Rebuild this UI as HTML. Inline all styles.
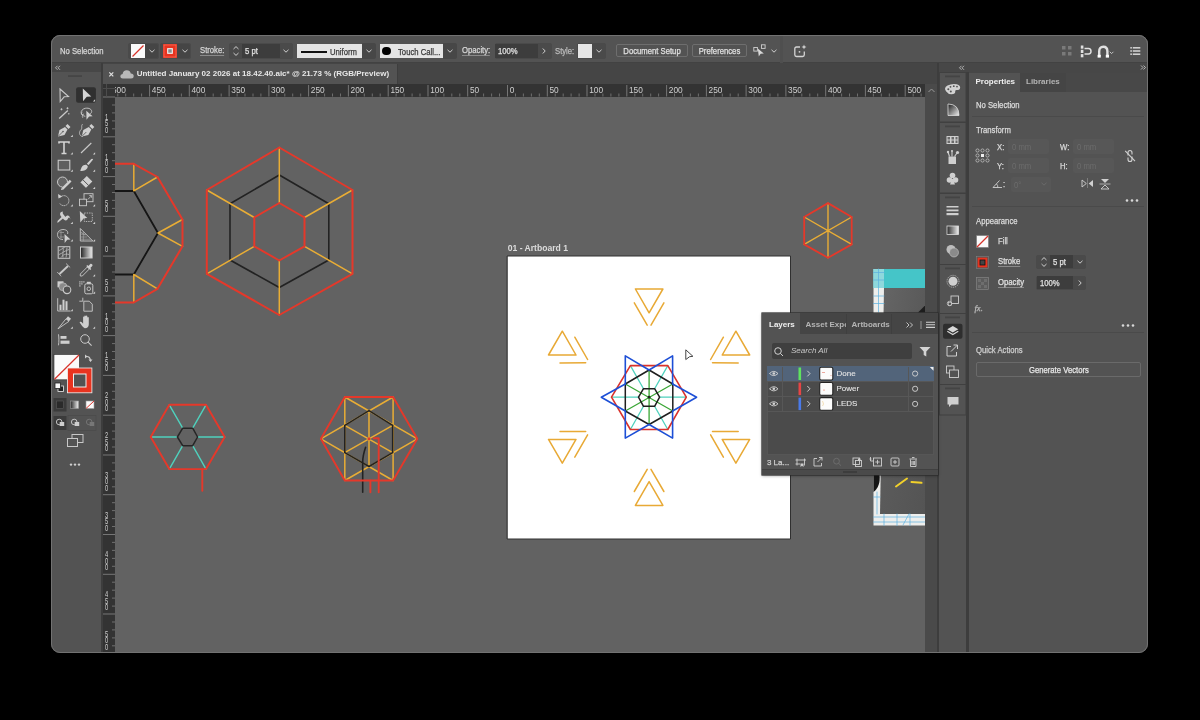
<!DOCTYPE html>
<html><head><meta charset="utf-8">
<style>
*{box-sizing:border-box;margin:0;padding:0}
html,body{width:1200px;height:720px;overflow:hidden;background:#000;font-family:"Liberation Sans",sans-serif;color:#e4e4e4}
.a{position:absolute}
#win{position:absolute;left:0;top:0;width:1200px;height:720px;clip-path:inset(35px 52px 67px 51px round 9px);background:#535353}
#frame{position:absolute;left:51px;top:35px;width:1097px;height:618px;border:1px solid #727272;border-radius:9px;pointer-events:none}
.t{filter:grayscale(1);position:absolute;white-space:nowrap;font-size:8.5px;line-height:10px;-webkit-text-stroke:0.25px currentColor}
</style></head><body>
<div id="win">
  <!-- control bar -->
  <div class="a" style="left:51px;top:35px;width:1097px;height:28px;background:#535353"></div>
  <!-- tools panel strip -->
  <div class="a" style="left:51px;top:63px;width:50px;height:9px;background:#474747"></div>
  <div class="a" style="left:101px;top:63px;width:2px;height:590px;background:#3d3d3d"></div>
  <!-- tab bar -->
  <div class="a" style="left:103px;top:63px;width:834px;height:21px;background:#454545"></div>
  <div class="a" style="left:103px;top:63.6px;width:294px;height:20px;background:#535353"></div><div class="a" style="left:397px;top:63.6px;width:1px;height:20px;background:#3e3e3e"></div><div class="a" style="left:51px;top:62.3px;width:1097px;height:1.2px;background:#424242"></div>
  <!-- rulers -->
  <div class="a" style="left:103px;top:84px;width:822px;height:12.5px;background:#333"></div>
  <div class="a" style="left:103px;top:84px;width:12px;height:568px;background:#333"></div>
  <!-- canvas -->
  <div class="a" style="left:115px;top:96.5px;width:810px;height:556px;background:#626262"></div>
  <!-- scroll col -->
  <div class="a" style="left:925px;top:84px;width:12.5px;height:568px;background:#4a4a4a"></div>
  <div class="a" style="left:937px;top:63px;width:2px;height:590px;background:#3d3d3d"></div>
  <!-- dock column -->
  <div class="a" style="left:939px;top:63px;width:209px;height:9.5px;background:#474747"></div>
  <div class="a" style="left:966px;top:72px;width:3px;height:581px;background:#3d3d3d"></div>
  <!-- CONTROL BAR -->
<div class="t" style="left:60px;top:46px;font-size:8.3px;color:#d6d6d6;transform:scaleX(0.928);transform-origin:left center">No Selection</div>
<div class="a" style="left:127.5px;top:43px;width:31px;height:15.5px;background:#4a4a4a;border-radius:2px"></div>
<div class="a" style="left:145px;top:43.5px;width:13px;height:14.5px;background:#454545;border-radius:0 2px 2px 0"></div>
<svg class="a" style="left:131px;top:44px" width="14" height="14" viewBox="0 0 14 14"><rect x="0" y="0" width="14" height="14" fill="#fafafa"/><path d="M1.5 12.5L12.5 1.5" stroke="#d8322a" stroke-width="1.3"/></svg>
<svg class="a" style="left:148px;top:48px" width="8" height="6" viewBox="0 0 8 6"><path d="M1.5 1.8L4 4.2L6.5 1.8" fill="none" stroke="#d0d0d0" stroke-width="1"/></svg>
<div class="a" style="left:160px;top:43px;width:31px;height:15.5px;background:#4a4a4a;border-radius:2px"></div>
<div class="a" style="left:177.3px;top:43.5px;width:13px;height:14.5px;background:#454545;border-radius:0 2px 2px 0"></div>
<svg class="a" style="left:163.3px;top:44px" width="14" height="14" viewBox="0 0 14 14"><rect x="0" y="0" width="14" height="14" fill="#e8331f"/><rect x="1" y="1" width="12" height="12" fill="none" stroke="#f08070" stroke-width="0.6"/><rect x="4.7" y="4.7" width="4.6" height="4.6" fill="#8a8a8a" stroke="#f4f4f4" stroke-width="1.1"/></svg>
<svg class="a" style="left:180.5px;top:48px" width="8" height="6" viewBox="0 0 8 6"><path d="M1.5 1.8L4 4.2L6.5 1.8" fill="none" stroke="#d0d0d0" stroke-width="1"/></svg>

<div class="t" style="left:200px;top:46px;font-size:8.3px;color:#d6d6d6;border-bottom:1px solid #8a8a8a;line-height:9px;transform:scaleX(0.928);transform-origin:left center">Stroke:</div>
<div class="a" style="left:228.5px;top:43px;width:64px;height:15.5px;background:#4a4a4a;border-radius:2px"></div>
<div class="a" style="left:242px;top:44px;width:38px;height:13.7px;background:#3d3d3d"></div>
<svg class="a" style="left:230px;top:44px" width="12" height="14" viewBox="0 0 12 14"><path d="M3.5 5L6 2.6L8.5 5M3.5 9L6 11.4L8.5 9" fill="none" stroke="#cfcfcf" stroke-width="1"/></svg>
<div class="t" style="left:245px;top:46px;font-size:8.3px;color:#e0e0e0;transform:scaleX(0.928);transform-origin:left center">5 pt</div>
<svg class="a" style="left:282px;top:48px" width="8" height="6" viewBox="0 0 8 6"><path d="M1.5 1.8L4 4.2L6.5 1.8" fill="none" stroke="#d0d0d0" stroke-width="1"/></svg>

<div class="a" style="left:296.7px;top:44px;width:65.3px;height:13.8px;background:#e4e4e4"></div>
<div class="a" style="left:301px;top:51px;width:26px;height:1.6px;background:#111"></div>
<div class="t" style="left:330px;top:46.5px;font-size:8.3px;color:#3a3a3a;transform:scaleX(0.928);transform-origin:left center">Uniform</div>
<div class="a" style="left:362px;top:43px;width:14px;height:15.5px;background:#474747;border-radius:0 2px 2px 0"></div>
<svg class="a" style="left:365px;top:48px" width="8" height="6" viewBox="0 0 8 6"><path d="M1.5 1.8L4 4.2L6.5 1.8" fill="none" stroke="#d0d0d0" stroke-width="1"/></svg>

<div class="a" style="left:380px;top:44px;width:63px;height:13.8px;background:#e4e4e4"></div>
<div class="a" style="left:382.3px;top:46.7px;width:8.6px;height:8.6px;background:#000;border-radius:50%"></div>
<div class="t" style="left:398px;top:46.5px;font-size:8.3px;color:#3a3a3a;transform:scaleX(0.928);transform-origin:left center">Touch Call...</div>
<div class="a" style="left:443px;top:43px;width:14px;height:15.5px;background:#474747;border-radius:0 2px 2px 0"></div>
<svg class="a" style="left:446px;top:48px" width="8" height="6" viewBox="0 0 8 6"><path d="M1.5 1.8L4 4.2L6.5 1.8" fill="none" stroke="#d0d0d0" stroke-width="1"/></svg>

<div class="t" style="left:461.7px;top:46px;font-size:8.3px;color:#d6d6d6;border-bottom:1px solid #8a8a8a;line-height:9px;transform:scaleX(0.928);transform-origin:left center">Opacity:</div>
<div class="a" style="left:494.5px;top:43px;width:57px;height:15.5px;background:#4a4a4a;border-radius:2px"></div>
<div class="a" style="left:495.3px;top:44px;width:42.7px;height:13.7px;background:#3d3d3d"></div>
<div class="t" style="left:497.5px;top:46px;font-size:8.3px;color:#e0e0e0;transform:scaleX(0.928);transform-origin:left center">100%</div>
<svg class="a" style="left:540px;top:47px" width="8" height="8" viewBox="0 0 8 8"><path d="M2.8 1.5L5.2 4L2.8 6.5" fill="none" stroke="#d0d0d0" stroke-width="1"/></svg>
<div class="t" style="left:554.7px;top:46px;font-size:8.3px;color:#bcbcbc;transform:scaleX(0.928);transform-origin:left center">Style:</div>
<div class="a" style="left:577px;top:43px;width:29px;height:15.5px;background:#4a4a4a;border-radius:2px"></div>
<div class="a" style="left:578px;top:44px;width:14.3px;height:13.7px;background:#e6e6e6"></div>
<svg class="a" style="left:595px;top:48px" width="8" height="6" viewBox="0 0 8 6"><path d="M1.5 1.8L4 4.2L6.5 1.8" fill="none" stroke="#d0d0d0" stroke-width="1"/></svg>

<div class="a" style="left:615.6px;top:44.4px;width:72px;height:13px;border:1px solid #6e6e6e;border-radius:2px"></div>
<div class="t" style="left:615.6px;top:46px;width:72px;text-align:center;font-size:8.3px;color:#e0e0e0;transform:scaleX(0.928);transform-origin:center">Document Setup</div>
<div class="a" style="left:691.7px;top:44.4px;width:55px;height:13px;border:1px solid #6e6e6e;border-radius:2px"></div>
<div class="t" style="left:691.7px;top:46px;width:55px;text-align:center;font-size:8.3px;color:#e0e0e0;transform:scaleX(0.928);transform-origin:center">Preferences</div>
<svg class="a" style="left:753px;top:44px" width="14" height="14" viewBox="0 0 14 14" fill="none" stroke="#cfcfcf" stroke-width="0.9"><rect x="0.8" y="3.5" width="3.6" height="3.6"/><rect x="8.5" y="0.8" width="3.6" height="3.6"/><path d="M4.8 4.5L5.8 12.5L7.6 9.8L10.8 9.6Z" fill="#d8d8d8" stroke="none"/></svg>
<svg class="a" style="left:769.5px;top:48px" width="8" height="6" viewBox="0 0 8 6"><path d="M1.5 1.8L4 4.2L6.5 1.8" fill="none" stroke="#d0d0d0" stroke-width="1"/></svg>
<div class="a" style="left:779.5px;top:36px;width:3.5px;height:26.5px;background:#4f4f4f"></div>
<svg class="a" style="left:793px;top:43.5px" width="14" height="14" viewBox="0 0 14 14" fill="none" stroke="#d4d4d4" stroke-width="1.3"><path d="M7 3H3.5Q1.8 3 1.8 4.7V10.8Q1.8 12.5 3.5 12.5H9.6Q11.3 12.5 11.3 10.8V7.5"/><circle cx="6.5" cy="7.8" r="0.9" fill="#d4d4d4" stroke="none"/><path d="M11 0.5L11.7 2.3L13.5 3L11.7 3.7L11 5.5L10.3 3.7L8.5 3L10.3 2.3Z" fill="#d4d4d4" stroke="none"/></svg>

<svg class="a" style="left:1061px;top:45px" width="12" height="12" viewBox="0 0 12 12" fill="#7a7a7a"><rect x="1" y="1" width="3.5" height="3.5"/><rect x="7" y="1" width="3.5" height="3.5"/><rect x="1" y="7" width="3.5" height="3.5"/><rect x="7" y="7" width="3.5" height="3.5"/></svg>
<svg class="a" style="left:1080px;top:44.5px" width="13" height="13" viewBox="0 0 13 13"><g fill="#e0e0e0"><rect x="0.8" y="0.5" width="2.6" height="3.2"/><rect x="0.8" y="4.8" width="2.6" height="3.2"/><rect x="0.8" y="9.1" width="2.6" height="3.2"/></g><path d="M4.5 3.5H8.5Q11 3.5 11 6.3Q11 9 8.5 9H4.5" fill="none" stroke="#e0e0e0" stroke-width="1.5"/></svg>
<svg class="a" style="left:1097px;top:44.5px" width="20" height="13" viewBox="0 0 20 13"><path d="M2.2 11V6.5Q2.2 1.8 6.3 1.8Q10.4 1.8 10.4 6.5V11" fill="none" stroke="#e0e0e0" stroke-width="2.4"/><rect x="0.6" y="9.8" width="3.2" height="2.8" fill="#fff"/><rect x="8.8" y="9.8" width="3.2" height="2.8" fill="#fff"/><path d="M12.8 6.8L14.6 8.6L16.4 6.8" fill="none" stroke="#d0d0d0" stroke-width="0.9"/></svg>
<svg class="a" style="left:1129.5px;top:46px" width="11" height="10" viewBox="0 0 11 10" fill="#cfcfcf"><rect x="0.3" y="1" width="1.6" height="1.6"/><rect x="0.3" y="4.2" width="1.6" height="1.6"/><rect x="0.3" y="7.4" width="1.6" height="1.6"/><rect x="2.8" y="1" width="7.5" height="1.6"/><rect x="2.8" y="4.2" width="7.5" height="1.6"/><rect x="2.8" y="7.4" width="7.5" height="1.6"/></svg>

  <svg class="a" style="left:0;top:0" width="1200" height="720" viewBox="0 0 1200 720" stroke-linecap="butt">
<rect x="76.1" y="87.2" width="19.8" height="15.6" rx="2" fill="#303030"/>
<g transform="translate(64.0 95.0)"><path d="M-4 -6L4.5 1.5L0.2 1.8L-3.8 6.5Z" fill="none" stroke="#c9c9c9" stroke-width="1.1"/></g>
<g transform="translate(86.3 95.0)"><path d="M-3.5 -6.5L5 1.5L0.5 1.8L-3.3 6.3Z" fill="#d4d4d4"/></g>
<path d="M95.1 99.3L95.1 101.5L92.9 101.5Z" fill="#d0d0d0"/>
<g transform="translate(64.0 112.8)"><path d="M-4.8 5.6L3.8 -2.3" stroke="#c9c9c9" stroke-width="1.3"/><path d="M-2.5 -4.5L-2.5 -2.5M-3.5 -3.5H-1.5M3.5 -5.5V-3.5M2.5 -4.5H4.5M4.8 0.5V1.5M4.3 1H5.3" stroke="#c9c9c9" stroke-width="0.9"/></g>
<g transform="translate(86.3 112.8)"><path d="M-1 3.5C-6 3 -7 -3 -1 -4.5C5 -5.5 7 -1 4 1" fill="none" stroke="#c9c9c9" stroke-width="0.9"/><path d="M-4 -1C-6 1 -4 3 -3 1.5C-2 0 -5 3 -3.5 5" fill="none" stroke="#c9c9c9" stroke-width="0.8"/><path d="M0 -2L6.3 3.5L2.8 3.8L0.2 7Z" fill="#cfcfcf"/></g>
<g transform="translate(64.0 130.5)"><path d="M-6 6L-4.5 -0.5L1 -3.5L3.5 -1L0.5 4.5Z" fill="#cfcfcf"/><path d="M1.5 -4.5L3.5 -6.5L6.5 -3.5L4.5 -1.5Z" fill="#cfcfcf"/><path d="M-5.5 5.5L-1.5 1.5" stroke="#535353" stroke-width="0.8"/><circle cx="-1" cy="1" r="0.8" fill="#535353"/></g>
<path d="M72.8 134.8L72.8 137.0L70.6 137.0Z" fill="#d0d0d0"/>
<g transform="translate(86.3 130.5)"><path d="M-4.5 6L-3 -0.5L2.5 -3.5L5 -1L2 4.5Z" fill="#cfcfcf"/><path d="M3 -4.5L5 -6.5L8 -3.5L6 -1.5Z" fill="#cfcfcf"/><path d="M-4 5.5L0 1.5" stroke="#535353" stroke-width="0.8"/><path d="M-3.5 -6.5C-6 -4.5 -3 -2.5 -6 0C-8 3 -6 6 -3.5 6" fill="none" stroke="#c9c9c9" stroke-width="0.8"/></g>
<g transform="translate(64.0 148.0)"><path d="M-5 -4.5V-6H5V-4.5M0 -6V5.5M-2.5 5.5H2.5" fill="none" stroke="#d4d4d4" stroke-width="1.6"/></g>
<path d="M72.8 152.3L72.8 154.5L70.6 154.5Z" fill="#d0d0d0"/>
<g transform="translate(86.3 148.0)"><path d="M-5.3 5L5 -5" stroke="#c9c9c9" stroke-width="1.1"/></g>
<path d="M95.1 152.3L95.1 154.5L92.9 154.5Z" fill="#d0d0d0"/>
<g transform="translate(64.0 165.3)"><rect x="-5.8" y="-5" width="11.6" height="9.7" fill="#5e5e5e" stroke="#c9c9c9" stroke-width="1.1"/></g>
<path d="M72.8 169.6L72.8 171.8L70.6 171.8Z" fill="#d0d0d0"/>
<g transform="translate(86.3 165.3)"><path d="M0.5 -1.5L5 -6.3Q6.3 -7 6.8 -5.8L2.3 -0.2Z" fill="#cfcfcf"/><path d="M-6 5.8C-5.2 2 -3.5 -1 0 -0.5L1.5 1C1.2 4.5 -2 5.8 -6 5.8Z" fill="#cfcfcf"/></g>
<path d="M95.1 169.6L95.1 171.8L92.9 171.8Z" fill="#d0d0d0"/>
<g transform="translate(64.0 182.5)"><path d="M-1.5 4.5A5 5 0 1 1 3.5 -0.5" fill="#666" stroke="#c9c9c9" stroke-width="1"/><path d="M-2.5 5.5L5.8 -2.8L7.5 -1.1L-0.8 7.2Z" fill="#cfcfcf"/><path d="M-2.5 5.5L-3 7.5L-0.8 7.2Z" fill="#cfcfcf"/></g>
<path d="M72.8 186.8L72.8 189.0L70.6 189.0Z" fill="#d0d0d0"/>
<g transform="translate(86.3 182.5)"><path d="M0.5 -6.5L6 -1L-0.5 5.5L-6 0Z" fill="#cfcfcf"/><path d="M-6 0L-0.5 5.5" stroke="#535353" stroke-width="0.5"/><path d="M-3.5 -2.8L2.5 3.2" stroke="#535353" stroke-width="1"/></g>
<path d="M95.1 186.8L95.1 189.0L92.9 189.0Z" fill="#d0d0d0"/>
<g transform="translate(64.0 200.0)"><path d="M-3.5 -3A5 5 0 1 1 -4.5 3" fill="none" stroke="#c9c9c9" stroke-width="1" stroke-dasharray="1.3 0.7"/><path d="M-6 -6L-5.5 -1.5L-1.8 -3.5Z" fill="#cfcfcf"/></g>
<path d="M72.8 204.3L72.8 206.5L70.6 206.5Z" fill="#d0d0d0"/>
<g transform="translate(86.3 200.0)"><rect x="-2.3" y="-6.3" width="9" height="8" fill="none" stroke="#c9c9c9" stroke-width="0.9"/><rect x="-6.8" y="-0.8" width="7" height="6.5" fill="#535353" stroke="#c9c9c9" stroke-width="0.9"/><path d="M1.5 -0.5L5 -4M3 -4.5H5.3V-2.2" fill="none" stroke="#c9c9c9" stroke-width="0.8"/></g>
<path d="M95.1 204.3L95.1 206.5L92.9 206.5Z" fill="#d0d0d0"/>
<g transform="translate(64.0 217.5)"><path d="M-6.5 5.5L-1 1C0 3 3 4 4 1C5 -1 6 0 6.5 2.5C6 -2.5 3 -3 1.5 -0.5C0 -3 -2 -3.5 -1 -6C-4 -6 -5 -3 -2.5 -0.5L-6.5 3.5Z" fill="#cfcfcf"/></g>
<path d="M72.8 221.8L72.8 224.0L70.6 224.0Z" fill="#d0d0d0"/>
<g transform="translate(86.3 217.5)"><path d="M-6.5 -6.5L1 0.5L-2.5 0.8L-6 5Z" fill="#cfcfcf"/><rect x="-2" y="-4.5" width="8" height="8.5" fill="none" stroke="#c9c9c9" stroke-width="0.8" stroke-dasharray="1.4 1"/></g>
<path d="M95.1 221.8L95.1 224.0L92.9 224.0Z" fill="#d0d0d0"/>
<g transform="translate(64.0 235.0)"><path d="M-1 4.5C-5 4.5 -6.5 2 -6.5 -0.5C-6.5 -3.5 -4 -5.5 -1 -5.5C2.5 -5.5 4.5 -3.5 3.5 -1" fill="none" stroke="#c9c9c9" stroke-width="0.9"/><path d="M-4.5 -2.5H0M-4.5 2H0M-3 -4V3.5" stroke="#9a9a9a" stroke-width="0.8"/><path d="M0.5 -1L6.5 4.5L3.2 4.8L0.7 8Z" fill="#cfcfcf"/></g>
<path d="M72.8 239.3L72.8 241.5L70.6 241.5Z" fill="#d0d0d0"/>
<g transform="translate(86.3 235.0)"><path d="M-6 -6.5V6H6.5L-6 -6.5" fill="none" stroke="#c9c9c9" stroke-width="0.9"/><path d="M-6 -3.5L-1 0.5M-6 2L1 2M-6 4.2H4.5M-3 -3.5V6M-6 -1L0 -0.5" stroke="#a8a8a8" stroke-width="0.7"/></g>
<path d="M95.1 239.3L95.1 241.5L92.9 241.5Z" fill="#d0d0d0"/>
<g transform="translate(64.0 252.5)"><rect x="-5.8" y="-5.8" width="11.6" height="11.6" fill="none" stroke="#c9c9c9" stroke-width="1"/><path d="M-5 -2C-2 -3 0 -6 1 -5M-5 2C-2 1 1 -2 5 -3M-3 5C-1 2 2 1 5 2M-1 -5C0 -1 -2 2 -1 5M3 -5C2 -1 3 2 2 5" fill="none" stroke="#bdbdbd" stroke-width="0.8"/></g>
<g transform="translate(86.3 252.5)"><defs><linearGradient id="tg" x1="0" x2="1"><stop offset="0" stop-color="#222"/><stop offset="1" stop-color="#eee"/></linearGradient></defs><rect x="-5.8" y="-5.5" width="11.6" height="11" fill="url(#tg)" stroke="#c9c9c9" stroke-width="1"/></g>
<g transform="translate(64.0 270.0)"><path d="M-4.5 4L4 -4" stroke="#c9c9c9" stroke-width="1.8"/><path d="M-6.8 2L-2.8 6.3M2 -6.5L6.2 -2.5" stroke="#c9c9c9" stroke-width="0.8"/></g>
<g transform="translate(86.3 270.0)"><path d="M-6 6L-6 4L1 -3L3 -1L-4 6Z" fill="none" stroke="#c9c9c9" stroke-width="0.9"/><path d="M0 -4L4 0L5 -1L4 -2L6 -4C7 -5 5 -7 4 -6L2 -4L1 -5Z" fill="#cfcfcf"/></g>
<path d="M95.1 274.3L95.1 276.5L92.9 276.5Z" fill="#d0d0d0"/>
<g transform="translate(64.0 287.3)"><rect x="-6.5" y="-6" width="6" height="6" fill="#cfcfcf"/><circle cx="-1" cy="-0.5" r="4" fill="#8a8a8a" stroke="#bdbdbd" stroke-width="0.7"/><circle cx="3" cy="2.5" r="3.8" fill="#535353" stroke="#c9c9c9" stroke-width="1.1"/></g>
<g transform="translate(86.3 287.3)"><rect x="-1.5" y="-3.5" width="8" height="10" rx="1.5" fill="none" stroke="#c9c9c9" stroke-width="1"/><rect x="0.5" y="-5.5" width="4" height="2" fill="#cfcfcf"/><circle cx="2.5" cy="1.5" r="1.8" fill="none" stroke="#c9c9c9" stroke-width="0.9"/><g fill="#cfcfcf"><rect x="-7" y="-6" width="1.2" height="1.2"/><rect x="-5" y="-6" width="1.2" height="1.2"/><rect x="-3" y="-6" width="1.2" height="1.2"/><rect x="-7" y="-4" width="1.2" height="1.2"/><rect x="-5" y="-4" width="1.2" height="1.2"/><rect x="-7" y="-2" width="1.2" height="1.2"/></g></g>
<path d="M95.1 291.6L95.1 293.8L92.9 293.8Z" fill="#d0d0d0"/>
<g transform="translate(64.0 304.7)"><path d="M-6.3 -6.5V6.3H6.5" fill="none" stroke="#c9c9c9" stroke-width="0.9"/><rect x="-4.5" y="0" width="2" height="5.5" fill="#cfcfcf"/><rect x="-1.5" y="-5" width="2" height="10.5" fill="#cfcfcf"/><rect x="1.5" y="-3.5" width="2" height="9" fill="#cfcfcf"/></g>
<path d="M72.8 309.0L72.8 311.2L70.6 311.2Z" fill="#d0d0d0"/>
<g transform="translate(86.3 304.7)"><path d="M-2.5 -3.5H3L6 -0.5V6.5H-2.5Z" fill="#5e5e5e" stroke="#c9c9c9" stroke-width="0.9"/><path d="M-7 -3.5H-3.5M-3.5 -7V-3.5" stroke="#c9c9c9" stroke-width="0.9"/></g>
<g transform="translate(64.0 322.3)"><path d="M-6 6.5L2 -3.5L5 -1Z" fill="none" stroke="#c9c9c9" stroke-width="0.9"/><path d="M2 -3.5L4 -6L7 -3.5L5 -1Z" fill="#cfcfcf"/></g>
<path d="M72.8 326.6L72.8 328.8L70.6 328.8Z" fill="#d0d0d0"/>
<g transform="translate(86.3 322.3)"><path d="M-1.5 6C-3.5 5 -5 2.5 -6.5 0.5C-7 -0.5 -5.5 -1 -4.5 0L-3.2 1.5V-5C-3.2 -6 -2 -6 -2 -5V-1V-6C-2 -7 -0.5 -7 -0.5 -6V-1V-6C-0.5 -7 1 -7 1 -6V-0.5V-4.5C1 -5.5 2.5 -5.5 2.5 -4.5V2C2.5 4.5 1 6 -1.5 6Z" fill="#cfcfcf"/></g>
<path d="M95.1 326.6L95.1 328.8L92.9 328.8Z" fill="#d0d0d0"/>
<g transform="translate(64.0 339.8)"><path d="M-5.5 -5.5C-5 -2 -5 2 -5.5 5.5" fill="none" stroke="#c9c9c9" stroke-width="0.9"/><rect x="-3.5" y="-3.8" width="6" height="2.8" fill="#cfcfcf"/><rect x="-3.5" y="0.8" width="9" height="3.2" fill="#cfcfcf"/></g>
<g transform="translate(86.3 339.8)"><circle cx="-1.3" cy="-0.8" r="4.3" fill="none" stroke="#c9c9c9" stroke-width="1"/><path d="M1.8 2.3L5.3 5.8" stroke="#c9c9c9" stroke-width="1.2"/></g>
<rect x="68" y="75.3" width="14" height="1.6" fill="#444"/>
<path d="M57.5 65.8L55.5 67.8L57.5 69.8M60 65.8L58 67.8L60 69.8" fill="none" stroke="#cfcfcf" stroke-width="0.8"/>
<rect x="54" y="354.5" width="25.4" height="25.3" fill="#fafafa" stroke="#2a2a2a" stroke-width="0.6"/>
<path d="M54.5 379.3L79 355" stroke="#d8322a" stroke-width="1.2"/>
<rect x="67.5" y="368" width="24.4" height="24.8" fill="#e8331f" stroke="#f0f0f0" stroke-width="0.8"/>
<rect x="73.5" y="374" width="12.5" height="13" fill="#535353" stroke="#f0f0f0" stroke-width="1"/>
<path d="M86 356.5Q90 356 90.5 360.5" fill="none" stroke="#cfcfcf" stroke-width="1.1"/><path d="M85 354.5L87.5 356.5L85 358.5ZM88.5 359.5L90.5 362L92.5 359.5Z" fill="#cfcfcf"/>
<rect x="58" y="386" width="5.5" height="5.5" fill="#222" stroke="#eee" stroke-width="0.8"/><rect x="55" y="383" width="5.5" height="5.5" fill="#fafafa" stroke="#222" stroke-width="0.8"/>
<rect x="53.5" y="398" width="13" height="13.5" fill="#3b3b3b"/><rect x="56.5" y="401" width="7" height="7.5" fill="#2a2a2a" stroke="#5a5a5a" stroke-width="0.6"/>
<defs><linearGradient id="g2" x1="0" x2="1"><stop offset="0" stop-color="#2a2a2a"/><stop offset="1" stop-color="#f0f0f0"/></linearGradient></defs><rect x="70.5" y="401" width="8" height="7.5" fill="url(#g2)" stroke="#999" stroke-width="0.6"/>
<rect x="86" y="401" width="8" height="7.5" fill="#fafafa" stroke="#999" stroke-width="0.6"/><path d="M86 408.5L94 401" stroke="#d8322a" stroke-width="1"/>
<rect x="53.5" y="416" width="13" height="14" fill="#3b3b3b"/>
<circle cx="59.2" cy="422" r="2.8" fill="none" stroke="#cfcfcf" stroke-width="0.9"/><rect x="59.7" y="422" width="4.5" height="4" fill="#cfcfcf"/>
<circle cx="74.2" cy="422" r="2.8" fill="none" stroke="#cfcfcf" stroke-width="0.9"/><rect x="74.7" y="422" width="4.5" height="4" fill="#cfcfcf"/>
<circle cx="89.2" cy="422" r="2.8" fill="none" stroke="#777" stroke-width="0.9"/><rect x="89.7" y="422" width="4.5" height="4" fill="#777"/>
<rect x="68" y="415.5" width="28" height="15" fill="none" stroke="#4a4a4a" stroke-width="0.7"/>
<rect x="72" y="434.5" width="11" height="8" fill="none" stroke="#c8c8c8" stroke-width="1"/><rect x="67.5" y="438.5" width="10" height="8" fill="#535353" stroke="#c8c8c8" stroke-width="1"/>
<g fill="#cfcfcf"><circle cx="71" cy="464.6" r="1.2"/><circle cx="75" cy="464.6" r="1.2"/><circle cx="79" cy="464.6" r="1.2"/></g>
</svg>
  <!-- TAB -->
<svg class="a" style="left:107px;top:69.5px" width="9" height="9" viewBox="0 0 9 9"><path d="M2.3 2.3L6.3 6.3M6.3 2.3L2.3 6.3" stroke="#e0e0e0" stroke-width="1.2"/></svg>
<svg class="a" style="left:119.5px;top:67.5px" width="14" height="11" viewBox="0 0 14 11"><path d="M2.8 10.5Q0.3 10.5 0.3 8.3Q0.3 6.2 2.6 6Q3 2.2 6.8 2.2Q10 2.2 10.8 5.4Q13.7 5.6 13.7 8Q13.7 10.5 11 10.5Z" fill="#b8b8b8"/></svg>
<div class="t" style="left:136.7px;top:68.5px;font-size:8px;font-weight:bold;color:#e8e8e8;-webkit-text-stroke:0">Untitled January 02 2026 at 18.42.40.aic* @ 21.73 % (RGB/Preview)</div>
<!-- scroll up arrow -->
<svg class="a" style="left:926px;top:86px" width="11" height="9" viewBox="0 0 11 9"><path d="M2.5 6L5.5 3L8.5 6" fill="none" stroke="#9a9a9a" stroke-width="1"/></svg>

  <svg class="a" style="left:0;top:0" width="1200" height="720" viewBox="0 0 1200 720">
<path d="M961.5 65.8L959.5 67.8L961.5 69.8M964 65.8L962 67.8L964 69.8" fill="none" stroke="#cfcfcf" stroke-width="0.8"/>
<path d="M1141 65.5L1143 67.5L1141 69.5M1143.5 65.5L1145.5 67.5L1143.5 69.5" fill="none" stroke="#cfcfcf" stroke-width="0.8"/>
<g fill="none" stroke="#404040" stroke-width="1">
<rect x="939.5" y="72.5" width="26.5" height="49.5" fill="#535353"/>
<rect x="939.5" y="122.5" width="26.5" height="70.5" fill="#535353"/>
<rect x="939.5" y="193.5" width="26.5" height="71" fill="#535353"/>
<rect x="939.5" y="264.5" width="26.5" height="49" fill="#535353"/>
<rect x="939.5" y="313.5" width="26.5" height="71" fill="#535353"/>
<rect x="939.5" y="384.5" width="26.5" height="30.5" fill="#535353"/>
</g>
<g fill="#444">
<rect x="945" y="75.5" width="15" height="1.8"/><rect x="945" y="125.5" width="15" height="1.8"/><rect x="945" y="196.5" width="15" height="1.8"/><rect x="945" y="267.5" width="15" height="1.8"/><rect x="945" y="316.5" width="15" height="1.8"/><rect x="945" y="387.5" width="15" height="1.8"/>
</g>
<!-- palette -->
<path d="M946.2 91.5Q943.3 88 947.5 85.5Q952 83.2 956.8 84.3Q961 85.5 960 88.5Q959.2 90.5 956.8 90Q954.8 89.8 955.2 91.8Q955.5 94.2 951.5 94.2Q948 94.2 946.2 91.5Z" fill="#d2d2d2"/>
<g fill="#535353"><circle cx="948.3" cy="89.3" r="1"/><circle cx="950.8" cy="91.6" r="1"/><circle cx="950.5" cy="86.8" r="0.9"/><circle cx="953.8" cy="86.2" r="0.9"/><circle cx="957" cy="86.6" r="0.9"/></g>
<!-- gradient quarter -->
<defs><linearGradient id="dg" x1="0" y1="0" x2="1" y2="1"><stop offset="0" stop-color="#1a1a1a"/><stop offset="1" stop-color="#f0f0f0"/></linearGradient>
<linearGradient id="dg2" x1="0" x2="1"><stop offset="0" stop-color="#2a2a2a"/><stop offset="1" stop-color="#eee"/></linearGradient></defs>
<path d="M948 104V115.5H959Q959 104 948 104Z" fill="url(#dg)" stroke="#dcdcdc" stroke-width="0.8"/>
<!-- swatches -->
<rect x="946.5" y="136" width="12" height="8" fill="#cfcfcf"/>
<g fill="#6a6a6a"><rect x="947.5" y="137" width="2.5" height="2.5"/><rect x="951.5" y="137" width="2.5" height="2.5"/><rect x="955.5" y="137" width="2" height="2.5"/><rect x="947.5" y="140.5" width="2.5" height="2.5"/><rect x="951.5" y="140.5" width="2.5" height="2.5"/><rect x="955.5" y="140.5" width="2" height="2.5"/></g>
<!-- brushes -->
<path d="M948.5 156.5H956V164H948.5Z" fill="#cfcfcf"/>
<path d="M949.5 156.5L948 152M952 156.5V151.5M954.5 156.5L957 153" stroke="#cfcfcf" stroke-width="1.1"/>
<circle cx="948" cy="152" r="1.2" fill="#cfcfcf"/><circle cx="957.5" cy="152.5" r="1.6" fill="#cfcfcf"/><circle cx="952" cy="151" r="1.1" fill="#cfcfcf"/>
<!-- club -->
<g fill="#cfcfcf"><circle cx="952.5" cy="175.5" r="2.8"/><circle cx="949.5" cy="180" r="2.8"/><circle cx="955.5" cy="180" r="2.8"/><path d="M952 179L950 184.5H955L953 179Z"/></g>
<!-- stroke lines -->
<g fill="#cfcfcf"><rect x="946.5" y="206" width="12" height="1.5"/><rect x="946.5" y="209.5" width="12" height="1.8"/><rect x="946.5" y="213" width="12" height="2.2"/></g>
<!-- gradient rect -->
<rect x="947" y="226" width="11.5" height="8.5" fill="url(#dg2)" stroke="#dcdcdc" stroke-width="0.8"/>
<!-- transparency -->
<circle cx="951" cy="249.5" r="4.5" fill="#bdbdbd"/><circle cx="954" cy="252.5" r="4.5" fill="#8a8a8a" stroke="#c8c8c8" stroke-width="0.6"/>
<!-- appearance sun -->
<circle cx="953" cy="281.3" r="4.5" fill="#cfcfcf"/><circle cx="953" cy="281.3" r="6" fill="none" stroke="#cfcfcf" stroke-width="0.8" stroke-dasharray="1 1"/>
<!-- shape builder -->
<rect x="951" y="296" width="7.5" height="7.5" fill="none" stroke="#cfcfcf" stroke-width="0.9"/><circle cx="949.5" cy="303.5" r="2.2" fill="#535353" stroke="#cfcfcf" stroke-width="0.8"/><rect x="948.5" y="302.5" width="3" height="3" fill="none" stroke="#cfcfcf" stroke-width="0.6"/>
<!-- layers active -->
<rect x="943" y="323.8" width="19.5" height="15" rx="2" fill="#2e2e2e"/>
<path d="M952.8 326L958.3 329.2L952.8 332.4L947.3 329.2Z" fill="#d8d8d8"/>
<path d="M947.3 331.3L952.8 334.5L958.3 331.3" fill="none" stroke="#d8d8d8" stroke-width="1.1"/>
<!-- export -->
<path d="M951 346.5H947V356H956.5V352" fill="none" stroke="#cfcfcf" stroke-width="1"/><path d="M951 351.5L957.5 345M953.5 345H957.5V349" fill="none" stroke="#cfcfcf" stroke-width="1"/>
<!-- artboards -->
<rect x="946.5" y="366" width="7.5" height="7" fill="none" stroke="#cfcfcf" stroke-width="0.9"/><rect x="949.5" y="370" width="9" height="7.5" fill="#535353" stroke="#cfcfcf" stroke-width="0.9"/>
<!-- comment -->
<path d="M947.5 397H958.5V404.5H951.5L949 407V404.5H947.5Z" fill="#cfcfcf"/>
</svg>

  <svg class="a" style="left:0;top:0;filter:grayscale(1)" width="1200" height="720" viewBox="0 0 1200 720"><defs><clipPath id="rh"><rect x="115" y="84" width="810" height="13"/></clipPath><clipPath id="rv"><rect x="103" y="96.5" width="12" height="556"/></clipPath></defs><g stroke="#767676" stroke-width="1" fill="none"><path d="M149.6 85V96.5M189.3 85V96.5M229.1 85V96.5M268.9 85V96.5M308.6 85V96.5M348.4 85V96.5M388.2 85V96.5M428.0 85V96.5M467.7 85V96.5M507.5 85V96.5M547.3 85V96.5M587.0 85V96.5M626.8 85V96.5M666.6 85V96.5M706.4 85V96.5M746.1 85V96.5M785.9 85V96.5M825.7 85V96.5M865.4 85V96.5M905.2 85V96.5M103 97.0H115M103 136.8H115M103 176.6H115M103 216.3H115M103 256.1H115M103 295.9H115M103 335.6H115M103 375.4H115M103 415.2H115M103 455.0H115M103 494.7H115M103 534.5H115M103 574.3H115M103 614.0H115"/></g><g stroke="#6e6e6e" stroke-width="1" fill="none"><path d="M117.8 93.5V96.5M125.7 93.5V96.5M133.7 93.5V96.5M141.6 93.5V96.5M157.5 93.5V96.5M165.5 93.5V96.5M173.4 93.5V96.5M181.4 93.5V96.5M197.3 93.5V96.5M205.2 93.5V96.5M213.2 93.5V96.5M221.2 93.5V96.5M237.1 93.5V96.5M245.0 93.5V96.5M253.0 93.5V96.5M260.9 93.5V96.5M276.8 93.5V96.5M284.8 93.5V96.5M292.7 93.5V96.5M300.7 93.5V96.5M316.6 93.5V96.5M324.6 93.5V96.5M332.5 93.5V96.5M340.5 93.5V96.5M356.4 93.5V96.5M364.3 93.5V96.5M372.3 93.5V96.5M380.2 93.5V96.5M396.1 93.5V96.5M404.1 93.5V96.5M412.1 93.5V96.5M420.0 93.5V96.5M435.9 93.5V96.5M443.9 93.5V96.5M451.8 93.5V96.5M459.8 93.5V96.5M475.7 93.5V96.5M483.6 93.5V96.5M491.6 93.5V96.5M499.5 93.5V96.5M515.5 93.5V96.5M523.4 93.5V96.5M531.4 93.5V96.5M539.3 93.5V96.5M555.2 93.5V96.5M563.2 93.5V96.5M571.1 93.5V96.5M579.1 93.5V96.5M595.0 93.5V96.5M602.9 93.5V96.5M610.9 93.5V96.5M618.9 93.5V96.5M634.8 93.5V96.5M642.7 93.5V96.5M650.7 93.5V96.5M658.6 93.5V96.5M674.5 93.5V96.5M682.5 93.5V96.5M690.4 93.5V96.5M698.4 93.5V96.5M714.3 93.5V96.5M722.3 93.5V96.5M730.2 93.5V96.5M738.2 93.5V96.5M754.1 93.5V96.5M762.0 93.5V96.5M770.0 93.5V96.5M777.9 93.5V96.5M793.8 93.5V96.5M801.8 93.5V96.5M809.8 93.5V96.5M817.7 93.5V96.5M833.6 93.5V96.5M841.6 93.5V96.5M849.5 93.5V96.5M857.5 93.5V96.5M873.4 93.5V96.5M881.3 93.5V96.5M889.3 93.5V96.5M897.2 93.5V96.5M913.2 93.5V96.5M921.1 93.5V96.5M112 105.0H115M112 112.9H115M112 120.9H115M112 128.8H115M112 144.7H115M112 152.7H115M112 160.7H115M112 168.6H115M112 184.5H115M112 192.5H115M112 200.4H115M112 208.4H115M112 224.3H115M112 232.2H115M112 240.2H115M112 248.1H115M112 264.1H115M112 272.0H115M112 280.0H115M112 287.9H115M112 303.8H115M112 311.8H115M112 319.7H115M112 327.7H115M112 343.6H115M112 351.5H115M112 359.5H115M112 367.5H115M112 383.4H115M112 391.3H115M112 399.3H115M112 407.2H115M112 423.1H115M112 431.1H115M112 439.0H115M112 447.0H115M112 462.9H115M112 470.9H115M112 478.8H115M112 486.8H115M112 502.7H115M112 510.6H115M112 518.6H115M112 526.5H115M112 542.4H115M112 550.4H115M112 558.4H115M112 566.3H115M112 582.2H115M112 590.2H115M112 598.1H115M112 606.1H115M112 622.0H115M112 629.9H115M112 637.9H115M112 645.8H115"/></g><g clip-path="url(#rh)" fill="#d0d0d0" font-family="Liberation Sans" font-size="8.3"><text x="112.0" y="93" >500</text><text x="151.8" y="93" >450</text><text x="191.5" y="93" >400</text><text x="231.3" y="93" >350</text><text x="271.1" y="93" >300</text><text x="310.8" y="93" >250</text><text x="350.6" y="93" >200</text><text x="390.4" y="93" >150</text><text x="430.2" y="93" >100</text><text x="469.9" y="93" >50</text><text x="509.7" y="93" >0</text><text x="549.5" y="93" >50</text><text x="589.2" y="93" >100</text><text x="629.0" y="93" >150</text><text x="668.8" y="93" >200</text><text x="708.6" y="93" >250</text><text x="748.3" y="93" >300</text><text x="788.1" y="93" >350</text><text x="827.9" y="93" >400</text><text x="867.6" y="93" >450</text><text x="907.4" y="93" >500</text></g><g clip-path="url(#rv)" fill="#d0d0d0" font-family="Liberation Sans" font-size="8.4" text-anchor="middle"><text transform="translate(106.7 119.8) scale(0.68 1)">1</text><text transform="translate(106.7 126.3) scale(0.68 1)">5</text><text transform="translate(106.7 132.8) scale(0.68 1)">0</text><text transform="translate(106.7 159.6) scale(0.68 1)">1</text><text transform="translate(106.7 166.1) scale(0.68 1)">0</text><text transform="translate(106.7 172.6) scale(0.68 1)">0</text><text transform="translate(106.7 205.8) scale(0.68 1)">5</text><text transform="translate(106.7 212.3) scale(0.68 1)">0</text><text transform="translate(106.7 252.1) scale(0.68 1)">0</text><text transform="translate(106.7 285.4) scale(0.68 1)">5</text><text transform="translate(106.7 291.9) scale(0.68 1)">0</text><text transform="translate(106.7 318.6) scale(0.68 1)">1</text><text transform="translate(106.7 325.1) scale(0.68 1)">0</text><text transform="translate(106.7 331.6) scale(0.68 1)">0</text><text transform="translate(106.7 358.4) scale(0.68 1)">1</text><text transform="translate(106.7 364.9) scale(0.68 1)">5</text><text transform="translate(106.7 371.4) scale(0.68 1)">0</text><text transform="translate(106.7 398.2) scale(0.68 1)">2</text><text transform="translate(106.7 404.7) scale(0.68 1)">0</text><text transform="translate(106.7 411.2) scale(0.68 1)">0</text><text transform="translate(106.7 438.0) scale(0.68 1)">2</text><text transform="translate(106.7 444.5) scale(0.68 1)">5</text><text transform="translate(106.7 451.0) scale(0.68 1)">0</text><text transform="translate(106.7 477.7) scale(0.68 1)">3</text><text transform="translate(106.7 484.2) scale(0.68 1)">0</text><text transform="translate(106.7 490.7) scale(0.68 1)">0</text><text transform="translate(106.7 517.5) scale(0.68 1)">3</text><text transform="translate(106.7 524.0) scale(0.68 1)">5</text><text transform="translate(106.7 530.5) scale(0.68 1)">0</text><text transform="translate(106.7 557.3) scale(0.68 1)">4</text><text transform="translate(106.7 563.8) scale(0.68 1)">0</text><text transform="translate(106.7 570.3) scale(0.68 1)">0</text><text transform="translate(106.7 597.0) scale(0.68 1)">4</text><text transform="translate(106.7 603.5) scale(0.68 1)">5</text><text transform="translate(106.7 610.0) scale(0.68 1)">0</text><text transform="translate(106.7 636.8) scale(0.68 1)">5</text><text transform="translate(106.7 643.3) scale(0.68 1)">0</text><text transform="translate(106.7 649.8) scale(0.68 1)">0</text></g><g stroke="#4c4c4c" stroke-width="1"><path d="M103 88.5H115M106.5 84V96.5"/></g></svg>
  <svg class="a" style="left:0;top:0" width="1200" height="720" viewBox="0 0 1200 720">
<defs><clipPath id="cv"><rect x="115" y="96.5" width="810" height="556"/></clipPath></defs>
<g clip-path="url(#cv)" fill="none" stroke-linecap="round" stroke-linejoin="round">
<!-- left partial shape -->
<g stroke="#151515" stroke-width="1.8"><path d="M110 191H133.8L158 233L133.8 274.5H110"/></g>
<g stroke="#e9ad35" stroke-width="1.5"><path d="M133.8 163.8V190.8L157.5 177M158 233L182.5 219.5M158 233L182.5 246.3M133.8 274.5V302.5M133.8 274.5L157.5 288.8"/></g>
<g stroke="#e5382a" stroke-width="2"><path d="M110 163.8H133.8L157.5 177L182.5 219.5V246.3L157.5 288.8L133.8 302.5H110"/></g>
<!-- big hexagon -->
<g stroke="#222" stroke-width="1.6"><path d="M279.3 175L328.8 203.8V260L279.3 287.5L230 260V203.8Z"/></g>
<g stroke="#e9ad35" stroke-width="1.5"><path d="M279.3 147.5V203M352.5 190L304.5 217.5M352.5 273.8L304.5 246.3M279.3 315V260.5M206.8 273.8L254.3 246.3M206.8 190L254.3 217.5"/></g>
<g stroke="#e5382a" stroke-width="2"><path d="M279.3 147.5L352.5 190V273.8L279.3 315L206.8 273.8V190Z"/><path d="M279.3 203L304.5 217.5V246.3L279.3 260.5L254.3 246.3V217.5Z"/></g>
<!-- small top right hex -->
<g stroke="#e9ad35" stroke-width="1.4"><path d="M828 203.1V257.8M851.7 217L804.2 244.4M851.7 244.4L804.2 217"/></g>
<g stroke="#e5382a" stroke-width="1.8"><path d="M828 203.1L851.7 217V244.4L828 257.8L804.2 244.4V217Z"/></g>
<!-- bottom left hex 1 -->
<g stroke="#4fd1bd" stroke-width="1.4"><path d="M182.7 428.2L169.3 404.8M192.7 428.2L206 404.8M197.6 437H224.7M192.7 445.7L206 469.1M182.7 445.7L169.3 469.1M177.4 437H150.7"/></g>
<g stroke="#262626" stroke-width="1.5"><path d="M182.7 428.2H192.7L197.6 437L192.7 445.7H182.7L177.4 437Z"/></g>
<g stroke="#e5382a" stroke-width="1.9"><path d="M169.3 404.8H206L224.7 437L206 469.1H169.3L150.7 437Z"/><path d="M202.3 469.1V490.8"/></g>
<!-- bottom hex 2 -->
<g stroke="#e9ad35" stroke-width="1.5"><path d="M344.8 397V480.5M393.1 397V480.5M369 410.6V466.5M320.9 438.8L393.1 397M320.9 438.8L393.1 480.5M417.3 438.8L344.8 397M417.3 438.8L344.8 480.5M344.8 425.4L392.7 452.6M344.8 452.6L392.7 425.4"/></g>
<g stroke="#222" stroke-width="1.6"><path d="M369 410.6L392.7 425.4V452.6L369 466.5L344.8 452.6V425.4Z"/><path d="M365.6 447.3C364 452 362.7 456 362.7 462V492.3"/></g>
<g stroke="#e5382a" stroke-width="1.9"><path d="M344.8 397H393.1L417.3 438.8L393.1 480.5H344.8L320.9 438.8Z"/><path d="M373.6 438.2H378.7V492.3M370.4 480.5V492.3"/></g>
<circle cx="369" cy="438.8" r="1.5" fill="#e5382a" stroke="none"/>
<!-- photo -->
<defs><linearGradient id="pg" x1="0" y1="0" x2="1" y2="1"><stop offset="0" stop-color="#666"/><stop offset="0.5" stop-color="#5a5a5a"/><stop offset="1" stop-color="#545454"/></linearGradient></defs>
<rect x="873.5" y="269" width="52" height="256.5" fill="#eeeeec" stroke="none"/>
<rect x="873.5" y="269" width="52" height="19" fill="#45c5c8" stroke="none"/>
<rect x="873.5" y="269" width="10.5" height="19" fill="#8ed8dc" stroke="none"/>
<path d="M884 288H925.5V514H880Z" fill="url(#pg)" stroke="none"/>
<path d="M925.5 305V312.5H918Z" fill="#1e1e1e" stroke="none"/>
<g stroke="#5ab0e0" stroke-width="0.7"><path d="M873.5 272.5H884M873.5 280H884M878.5 269V312M873.5 296H884M873.5 303.5H884M873.5 497H880M877 492V514M873.5 517H925.5M873.5 522H925.5M884 514V525.5M897 514V525.5M910 514V525.5M903 525L909 514"/></g>
<path d="M873.5 475H879.5C880.5 482 878 489 873.5 492Z" fill="#151515" stroke="none"/>
<g stroke="#f2d12a" stroke-width="2"><path d="M896 486.5L907 478.5M911.5 482L921.5 482.8"/></g>
<!-- artboard -->
<rect x="507.5" y="256" width="283" height="283" fill="#fff" stroke="#303030" stroke-width="1"/>
<g stroke="#e8a935" stroke-width="1.5"><path d="M635.4 289.0L662.9 289.0L649.1 312.8ZM634.3 302.9L647.2 325.1M663.9 302.9L651.0 325.1M735.9 331.2L749.7 355.0L722.2 355.0ZM723.4 337.2L710.6 359.5M738.2 362.9L712.5 362.8M749.7 439.4L735.9 463.2L722.2 439.4ZM738.2 431.5L712.5 431.6M723.4 457.2L710.6 434.9M662.9 505.4L635.4 505.4L649.1 481.6ZM663.9 491.5L651.0 469.3M634.3 491.5L647.2 469.3M562.3 463.2L548.5 439.4L576.0 439.4ZM574.8 457.2L587.6 434.9M560.0 431.5L585.7 431.6M548.5 355.0L562.3 331.2L576.0 355.0ZM560.0 362.9L585.7 362.8M574.8 337.2L587.6 359.5"/></g>
<!-- center star -->
<g stroke="#4fd1bd" stroke-width="1.3"><path d="M611.5 397.2H638.5M659.6 397.2H686.3M630.4 365.6L643.5 388.7M667.8 365.6L654.6 388.7M630.4 429.5L643.5 406.3M667.8 429.5L654.6 406.3"/></g>
<g stroke="#3aa636" stroke-width="1.3"><path d="M649.1 370V424.5M672.8 384L625.3 411M672.8 411L625.3 384"/></g>
<g stroke="#1f1f1f" stroke-width="1.5"><path d="M649.1 370L672.8 384V411L649.1 424.5L625.3 411V384Z"/><path d="M643.5 388.7H654.6L659.6 397.2L654.6 406.3H643.5L638.5 397.2Z"/></g>
<circle cx="649.1" cy="397.2" r="1.4" fill="#1f1f1f" stroke="none"/>
<g stroke="#d9322b" stroke-width="1.6"><path d="M630.4 365.6H667.8L686.3 397.2L667.8 429.5H630.4L611.5 397.2Z"/></g>
<g stroke="#1d4fd6" stroke-width="1.6"><path d="M601.3 397.2L625.3 384V355.9L649.1 370L672.6 355.9V384L696.6 397.2L672.6 411V438.1L649.1 424.5L625.3 438.1V411Z"/></g>
<!-- cursor -->
<path d="M686.1 350.1L692.9 356.3L689.6 356.7L686.1 359.3Z" fill="#fff" stroke="#444" stroke-width="1" stroke-linejoin="miter"/>
</g>
</svg>

  <!-- properties -->
  
  <div class="a" style="left:969px;top:72.5px;width:179px;height:19px;background:#454545"></div>
  <div class="a" style="left:969px;top:72.5px;width:51px;height:19px;background:#535353"></div>
  <div class="t" style="left:507.7px;top:243px;font-size:8.6px;font-weight:bold;color:#dcdcdc;-webkit-text-stroke:0">01 - Artboard 1</div>
  <!-- PROPERTIES -->
<div class="t" style="left:975.5px;top:76.5px;font-size:8px;font-weight:bold;color:#f0f0f0;-webkit-text-stroke:0">Properties</div>
<div class="t" style="left:1026px;top:76.5px;font-size:8px;font-weight:bold;color:#b4b4b4;-webkit-text-stroke:0">Libraries</div>
<div class="a" style="left:1066px;top:72.5px;width:82px;height:19px;background:#484848"></div>
<div class="t" style="left:975.8px;top:99.5px;font-size:8.3px;color:#dcdcdc;transform:scaleX(0.928);transform-origin:left center">No Selection</div>
<div class="a" style="left:972px;top:116px;width:172px;height:1px;background:#4a4a4a"></div>
<div class="t" style="left:975.8px;top:124.5px;font-size:8.3px;color:#dcdcdc;transform:scaleX(0.928);transform-origin:left center">Transform</div>
<svg class="a" style="left:975px;top:148px" width="16" height="16" viewBox="0 0 16 16" fill="none" stroke="#cfcfcf" stroke-width="0.7"><circle cx="2.5" cy="2.5" r="1.6"/><circle cx="7.5" cy="2.5" r="1.6"/><circle cx="12.5" cy="2.5" r="1.6"/><circle cx="2.5" cy="7.5" r="1.6"/><rect x="6" y="6" width="3" height="3" fill="#eee" stroke="none"/><circle cx="12.5" cy="7.5" r="1.6"/><circle cx="2.5" cy="12.5" r="1.6"/><circle cx="7.5" cy="12.5" r="1.6"/><circle cx="12.5" cy="12.5" r="1.6"/></svg>
<div class="t" style="left:997.3px;top:142px;font-size:8.3px;color:#d8d8d8;transform:scaleX(0.928);transform-origin:left center">X:</div>
<div class="a" style="left:1008px;top:139.2px;width:41.4px;height:14.5px;background:#575757;border-radius:2px"></div>
<div class="t" style="left:1012px;top:142px;font-size:8.3px;color:#6c6c6c;-webkit-text-stroke:0;transform:scaleX(0.928);transform-origin:left center">0 mm</div>
<div class="t" style="left:1059.8px;top:142px;font-size:8.3px;color:#d8d8d8;transform:scaleX(0.928);transform-origin:left center">W:</div>
<div class="a" style="left:1072.9px;top:139.2px;width:41.1px;height:14.5px;background:#575757;border-radius:2px"></div>
<div class="t" style="left:1077px;top:142px;font-size:8.3px;color:#6c6c6c;-webkit-text-stroke:0;transform:scaleX(0.928);transform-origin:left center">0 mm</div>
<div class="t" style="left:997.3px;top:161px;font-size:8.3px;color:#d8d8d8;transform:scaleX(0.928);transform-origin:left center">Y:</div>
<div class="a" style="left:1008px;top:158px;width:41.4px;height:14.5px;background:#575757;border-radius:2px"></div>
<div class="t" style="left:1012px;top:161px;font-size:8.3px;color:#6c6c6c;-webkit-text-stroke:0;transform:scaleX(0.928);transform-origin:left center">0 mm</div>
<div class="t" style="left:1059.8px;top:161px;font-size:8.3px;color:#d8d8d8;transform:scaleX(0.928);transform-origin:left center">H:</div>
<div class="a" style="left:1072.9px;top:158px;width:41.1px;height:14.5px;background:#575757;border-radius:2px"></div>
<div class="t" style="left:1077px;top:161px;font-size:8.3px;color:#6c6c6c;-webkit-text-stroke:0;transform:scaleX(0.928);transform-origin:left center">0 mm</div>
<svg class="a" style="left:1123px;top:149px" width="14" height="14" viewBox="0 0 14 14" fill="none" stroke="#d0d0d0" stroke-width="1.1"><path d="M5 6.5V3.8Q5 1.5 7 1.5Q9 1.5 9 3.8V5.5"/><path d="M5 8.5V10.2Q5 12.5 7 12.5Q9 12.5 9 10.2V7.5"/><path d="M2.2 1.8L12 12.2"/></svg>
<svg class="a" style="left:992px;top:178px" width="12" height="11" viewBox="0 0 12 11" fill="none" stroke="#cfcfcf" stroke-width="0.9"><path d="M1 9.5H10M1 9.5L7.5 2.5M4.5 6Q6 7 5.8 9.5"/></svg>
<div class="t" style="left:1003px;top:179px;font-size:8.3px;color:#d8d8d8;transform:scaleX(0.928);transform-origin:left center">:</div>
<div class="a" style="left:1010.8px;top:177px;width:40.7px;height:14.7px;background:#575757;border-radius:2px"></div>
<div class="t" style="left:1014px;top:180px;font-size:8.3px;color:#6c6c6c;-webkit-text-stroke:0;transform:scaleX(0.928);transform-origin:left center">0°</div>
<svg class="a" style="left:1040px;top:181px" width="8" height="6" viewBox="0 0 8 6"><path d="M1.5 1.8L4 4.2L6.5 1.8" fill="none" stroke="#6a6a6a" stroke-width="1"/></svg>
<svg class="a" style="left:1081px;top:178px" width="13" height="11" viewBox="0 0 13 11"><path d="M1 2L5.3 5.5L1 9Z" fill="none" stroke="#d0d0d0" stroke-width="0.9"/><path d="M12 2L7.7 5.5L12 9Z" fill="#d0d0d0"/><path d="M6.5 0.5V10.5" stroke="#d0d0d0" stroke-width="0.7" stroke-dasharray="1 1"/></svg>
<svg class="a" style="left:1099px;top:177.5px" width="12" height="12" viewBox="0 0 12 12"><path d="M2 1H10L6 5Z" fill="#d0d0d0"/><path d="M2 11H10L6 7Z" fill="none" stroke="#d0d0d0" stroke-width="0.9"/><path d="M0.5 6H11.5" stroke="#d0d0d0" stroke-width="0.7"/></svg>
<g></g>
<svg class="a" style="left:1124px;top:197.5px" width="16" height="5" viewBox="0 0 16 5" fill="#d8d8d8"><circle cx="3" cy="2.5" r="1.3"/><circle cx="8" cy="2.5" r="1.3"/><circle cx="13" cy="2.5" r="1.3"/></svg>
<div class="a" style="left:972px;top:206.3px;width:172px;height:1px;background:#4a4a4a"></div>
<div class="t" style="left:975.6px;top:215.5px;font-size:8.3px;color:#dcdcdc;transform:scaleX(0.928);transform-origin:left center">Appearance</div>
<svg class="a" style="left:976px;top:235px" width="13" height="13" viewBox="0 0 13 13"><rect x="0.5" y="0.5" width="12" height="12" fill="#fafafa" stroke="#777" stroke-width="0.6"/><path d="M1 12L12 1" stroke="#d8322a" stroke-width="1.2"/></svg>
<div class="t" style="left:997.5px;top:236.3px;font-size:8.3px;color:#d8d8d8;transform:scaleX(0.928);transform-origin:left center">Fill</div>
<svg class="a" style="left:976px;top:256px" width="13" height="13" viewBox="0 0 13 13"><rect x="0.3" y="0.3" width="12.4" height="12.4" fill="#535353" stroke="#888" stroke-width="0.5"/><rect x="1.6" y="1.6" width="9.8" height="9.8" fill="#e8331f"/><rect x="4" y="4" width="5" height="5" fill="#444" stroke="#111" stroke-width="0.8"/></svg>
<div class="t" style="left:997.5px;top:257px;font-size:8.3px;color:#e0e0e0;border-bottom:1px solid #8a8a8a;line-height:9px;transform:scaleX(0.928);transform-origin:left center">Stroke</div>
<div class="a" style="left:1036.2px;top:254.6px;width:50.2px;height:14.5px;background:#4a4a4a;border-radius:2px"></div>
<div class="a" style="left:1050px;top:255.3px;width:23px;height:13px;background:#3d3d3d"></div>
<svg class="a" style="left:1037.5px;top:255px" width="12" height="14" viewBox="0 0 12 14"><path d="M3.5 5L6 2.6L8.5 5M3.5 9L6 11.4L8.5 9" fill="none" stroke="#cfcfcf" stroke-width="1"/></svg>
<div class="t" style="left:1052.5px;top:257px;font-size:8.3px;color:#e0e0e0;transform:scaleX(0.928);transform-origin:left center">5 pt</div>
<svg class="a" style="left:1076px;top:259px" width="8" height="6" viewBox="0 0 8 6"><path d="M1.5 1.8L4 4.2L6.5 1.8" fill="none" stroke="#d0d0d0" stroke-width="1"/></svg>
<svg class="a" style="left:976px;top:277px" width="13" height="13" viewBox="0 0 13 13"><rect x="0.5" y="0.5" width="12" height="12" fill="#5c5c5c" stroke="#8a8a8a" stroke-width="0.6"/><g fill="#6e6e6e"><rect x="2" y="2" width="3" height="3"/><rect x="8" y="2" width="3" height="3"/><rect x="5" y="5" width="3" height="3"/><rect x="2" y="8" width="3" height="3"/><rect x="8" y="8" width="3" height="3"/></g></svg>
<div class="t" style="left:997.5px;top:278px;font-size:8.3px;color:#e0e0e0;border-bottom:1px solid #8a8a8a;line-height:9px;transform:scaleX(0.928);transform-origin:left center">Opacity</div>
<div class="a" style="left:1036.2px;top:275.5px;width:50.2px;height:14.5px;background:#4a4a4a;border-radius:2px"></div>
<div class="a" style="left:1037px;top:276.3px;width:36px;height:13px;background:#3d3d3d"></div>
<div class="t" style="left:1039.5px;top:278px;font-size:8.3px;color:#e0e0e0;transform:scaleX(0.928);transform-origin:left center">100%</div>
<svg class="a" style="left:1075.5px;top:279px" width="8" height="8" viewBox="0 0 8 8"><path d="M2.8 1.5L5.2 4L2.8 6.5" fill="none" stroke="#d0d0d0" stroke-width="1"/></svg>
<div class="t" style="left:974.5px;top:303px;font-size:8.5px;font-style:italic;color:#bdbdbd;font-family:'Liberation Serif',serif">fx.</div>
<svg class="a" style="left:1120px;top:323px" width="16" height="5" viewBox="0 0 16 5" fill="#d8d8d8"><circle cx="3" cy="2.5" r="1.3"/><circle cx="8" cy="2.5" r="1.3"/><circle cx="13" cy="2.5" r="1.3"/></svg>
<div class="a" style="left:972px;top:332px;width:172px;height:1px;background:#4a4a4a"></div>
<div class="t" style="left:975.6px;top:345px;font-size:8.3px;color:#d0d0d0;transform:scaleX(0.928);transform-origin:left center">Quick Actions</div>
<div class="a" style="left:975.5px;top:362.3px;width:165.8px;height:14.5px;border:1px solid #6a6a6a;border-radius:2px"></div>
<div class="t" style="left:975.5px;top:364.8px;width:165.8px;text-align:center;font-size:8.3px;color:#e8e8e8;transform:scaleX(0.928);transform-origin:center">Generate Vectors</div>

  <!-- LAYERS PANEL -->
<div class="a" style="left:762.2px;top:312.7px;width:175.8px;height:162.3px;background:#535353;box-shadow:0 0 0 0.6px #2c2c2c, 0 1px 3px rgba(0,0,0,0.35)"></div>
<div class="a" style="left:762.2px;top:312.7px;width:175.8px;height:21.8px;background:#454545"></div>
<div class="a" style="left:762.2px;top:312.7px;width:37.5px;height:21.8px;background:#535353"></div>
<div class="a" style="left:845.5px;top:314px;width:1px;height:20px;background:#3f3f3f"></div>
<div class="a" style="left:891px;top:314px;width:1px;height:20px;background:#3f3f3f"></div>
<div class="t" style="left:769px;top:320px;font-size:8px;font-weight:bold;color:#f0f0f0;-webkit-text-stroke:0">Layers</div>
<div class="a" style="left:805.5px;top:316px;width:40px;height:16px;overflow:hidden"><div class="t" style="left:0;top:4px;font-size:8px;font-weight:bold;color:#b4b4b4;-webkit-text-stroke:0">Asset Export</div></div>
<div class="t" style="left:851.5px;top:320px;font-size:8px;font-weight:bold;color:#b4b4b4;-webkit-text-stroke:0">Artboards</div>
<svg class="a" style="left:905px;top:320px" width="32" height="10" viewBox="0 0 32 10"><path d="M1.5 2.5L4 5L1.5 7.5M5 2.5L7.5 5L5 7.5" fill="none" stroke="#cfcfcf" stroke-width="0.9"/><path d="M16 1V9" stroke="#a0a0a0" stroke-width="0.9"/><path d="M21 2.2H30M21 4.8H30M21 7.4H30" stroke="#cfcfcf" stroke-width="1.1"/></svg>
<div class="a" style="left:771.8px;top:343px;width:140.5px;height:16px;background:#3f3f3f;border-radius:2px"></div>
<svg class="a" style="left:773px;top:345.5px" width="12" height="12" viewBox="0 0 12 12" fill="none" stroke="#d0d0d0" stroke-width="1"><circle cx="5" cy="5" r="3.3"/><path d="M7.4 7.4L10 10"/></svg>
<div class="t" style="left:791px;top:346px;font-size:8px;font-style:italic;color:#c8c8c8;-webkit-text-stroke:0">Search All</div>
<svg class="a" style="left:919px;top:345.5px" width="12" height="12" viewBox="0 0 12 12"><path d="M0.5 1H11.5L7.3 5.5V10.5L4.7 9V5.5Z" fill="#d4d4d4"/></svg>
<div class="a" style="left:767px;top:366px;width:166.5px;height:89px;background:#4b4b4b;border:0.6px solid #565656"></div>
<div class="a" style="left:767px;top:366px;width:166.5px;height:15px;background:#52647a"></div>
<div class="a" style="left:767px;top:381px;width:166.5px;height:0.7px;background:#575757"></div>
<div class="a" style="left:767px;top:396px;width:166.5px;height:0.7px;background:#575757"></div>
<div class="a" style="left:767px;top:411.2px;width:166.5px;height:0.7px;background:#575757"></div>
<div class="a" style="left:782px;top:366.5px;width:0.7px;height:44.7px;background:#575757"></div>
<div class="a" style="left:907.7px;top:366.5px;width:0.7px;height:44.7px;background:#575757"></div>
<svg class="a" style="left:0;top:0" width="1200" height="720" viewBox="0 0 1200 720">
<g fill="none" stroke="#d4d4d4" stroke-width="0.9">
<path d="M769.5 373.5Q773.8 369.3 778 373.5Q773.8 377.7 769.5 373.5Z"/><circle cx="773.8" cy="373.5" r="1.3" fill="#d4d4d4" stroke="none"/>
<path d="M769.5 388.8Q773.8 384.6 778 388.8Q773.8 393 769.5 388.8Z"/><circle cx="773.8" cy="388.8" r="1.3" fill="#d4d4d4" stroke="none"/>
<path d="M769.5 403.8Q773.8 399.6 778 403.8Q773.8 408 769.5 403.8Z"/><circle cx="773.8" cy="403.8" r="1.3" fill="#d4d4d4" stroke="none"/>
</g>
<rect x="798.5" y="367.5" width="2.6" height="12.5" fill="#5fe35f"/>
<rect x="798.5" y="382.6" width="2.6" height="12.5" fill="#e64545"/>
<rect x="798.5" y="397.6" width="2.6" height="12.5" fill="#4a7ae8"/>
<g fill="none" stroke="#d8d8d8" stroke-width="0.9"><path d="M807.3 370.8L810 373.6L807.3 376.4"/><path d="M807.3 386L810 388.8L807.3 391.6"/><path d="M807.3 401L810 403.8L807.3 406.6"/></g>
<rect x="819.7" y="367.3" width="13.1" height="12.7" rx="1.5" fill="#fcfcfc" stroke="#232323" stroke-width="1.1"/>
<rect x="819.7" y="382.5" width="13.1" height="12.7" rx="1.5" fill="#fcfcfc" stroke="#232323" stroke-width="1.1"/>
<rect x="819.7" y="397.6" width="13.1" height="12.7" rx="1.5" fill="#fcfcfc" stroke="#232323" stroke-width="1.1"/>
<path d="M822 372.5H825M831 375V376" stroke="#e07060" stroke-width="0.6"/>
<circle cx="824" cy="390" r="0.6" fill="#e05030"/>
<path d="M822.5 401L823.5 404L822.5 406" stroke="#e8c070" stroke-width="0.5" fill="none"/>
<g fill="none" stroke="#d4d4d4" stroke-width="0.9"><circle cx="915.1" cy="373.6" r="2.6"/><circle cx="915.1" cy="388.8" r="2.6"/><circle cx="915.1" cy="403.9" r="2.6"/></g>
<path d="M929.8 367H933.5V370.7Z" fill="#f0f0f0"/>
<!-- footer icons -->
<g fill="none" stroke="#cfcfcf" stroke-width="0.9">
<path d="M797 458.5V465.5M804.5 458.5V465.5M795.5 460H806M795.5 464H800"/>
<path d="M817 458.5H814V466H821.5V463M817.5 462L822 457.5M819 457.5H822V460.5"/>
<g stroke="#6e6e6e"><circle cx="836.5" cy="461.2" r="2.9"/><path d="M838.6 463.3L841 465.7"/></g>
<rect x="853" y="458" width="6.5" height="6.5"/><rect x="855.5" y="460.5" width="6" height="6"/>
<path d="M870.5 457V461H873M871.5 459H869.5"/><rect x="873.5" y="458" width="8" height="8"/><path d="M877.5 459.8V464.2M875.3 462H879.7"/>
<rect x="891" y="458" width="8" height="8" rx="1"/><path d="M895 460V464M893 462H897"/>
<path d="M909.5 459H917M910.5 459.5V466.5H916V459.5M912 457.5H914.5M912 461V465M913.3 461V465M914.6 461V465"/>
</g>
<rect x="858" y="458.5" width="2.5" height="2.5" fill="#cfcfcf"/>
<path d="M800.5 463.5H803.5V467L802 465.8L800.5 467Z" fill="#cfcfcf"/>
</svg>
<div class="t" style="left:766.9px;top:457.5px;font-size:8px;color:#d0d0d0">3 La...</div>
<div class="a" style="left:762.2px;top:468.5px;width:175.8px;height:1.5px;background:#404040"></div>
<div class="a" style="left:762.2px;top:470px;width:175.8px;height:5px;background:#4a4a4a"></div>
<div class="a" style="left:843px;top:470.5px;width:14px;height:2px;background:#3d3d3d"></div>
<div class="t" style="left:836.5px;top:368.8px;font-size:8px;color:#e4e4e4;-webkit-text-stroke:0.1px">Done</div>
<div class="t" style="left:836.5px;top:384px;font-size:8px;color:#e4e4e4;-webkit-text-stroke:0.1px">Power</div>
<div class="t" style="left:836.5px;top:399.1px;font-size:8px;color:#e4e4e4;-webkit-text-stroke:0.1px">LEDS</div>

</div>
<div id="frame"></div>
</body></html>
